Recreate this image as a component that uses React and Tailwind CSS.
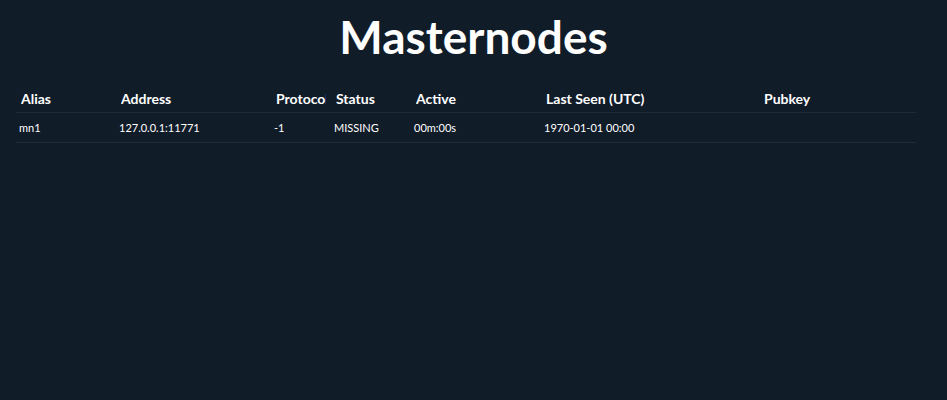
import React from 'react';

const columns = [
  { label: 'Alias', width: 'w-[100px]' },
  { label: 'Address', width: 'w-[155px]' },
  { label: 'Protocol', width: 'w-[60px]' },
  { label: 'Status', width: 'w-[80px]' },
  { label: 'Active', width: 'w-[130px]' },
  { label: 'Last Seen (UTC)', width: 'w-[218px]' },
  { label: 'Pubkey', width: 'w-[157px]' },
];

const rows = [
  { alias: 'mn1', address: '127.0.0.1:11771', protocol: '-1', status: 'MISSING', active: '00m:00s', lastSeen: '1970-01-01 00:00', pubkey: '' },
];

export default function App() {
  return (
    <div className="min-h-[400px] w-full bg-[#111c29] text-white font-['Lato',sans-serif]">
      <h1 className="pt-[7px] text-center text-[46px] font-bold leading-[60px]">Masternodes</h1>

      {/* Masternode table */}
      <div className="mt-[17px] px-4">
        <table className="w-[900px] table-fixed border-collapse">
          <colgroup>
            {columns.map(col => (
              <col key={col.label} className={col.width} />
            ))}
          </colgroup>
          <thead>
            <tr className="border-b border-[#1f2b3a]">
              {columns.map(col => (
                <th key={col.label} className="px-[5px] pb-[3px] pt-[5px] text-left text-[14px] font-bold leading-[20px]">
                  <div className="overflow-hidden whitespace-nowrap">{col.label}</div>
                </th>
              ))}
            </tr>
          </thead>
          <tbody>
            {rows.map(row => (
              <tr key={row.alias} className="border-b border-[#1f2b3a]">
                <td className="px-[3px] py-[6px] text-[11px] leading-[17px]">{row.alias}</td>
                <td className="px-[3px] py-[6px] text-[11px] leading-[17px]">{row.address}</td>
                <td className="px-[3px] py-[6px] text-[11px] leading-[17px]">{row.protocol}</td>
                <td className="px-[3px] py-[6px] text-[11px] leading-[17px]">{row.status}</td>
                <td className="px-[3px] py-[6px] text-[11px] leading-[17px]">{row.active}</td>
                <td className="px-[3px] py-[6px] text-[11px] leading-[17px]">{row.lastSeen}</td>
                <td className="px-[3px] py-[6px] text-[11px] leading-[17px]">{row.pubkey}</td>
              </tr>
            ))}
          </tbody>
        </table>
      </div>
    </div>
  );
}
